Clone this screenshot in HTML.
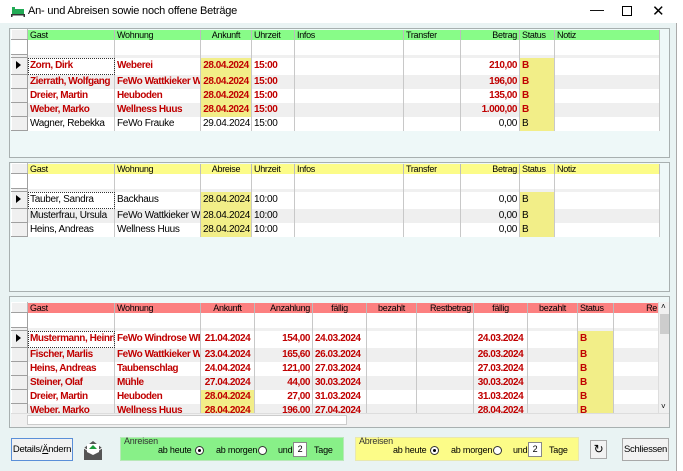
<!DOCTYPE html>
<html><head><meta charset="utf-8"><style>
*{box-sizing:border-box;margin:0;padding:0}
body{width:683px;height:471px;background:#fff;font-family:"Liberation Sans",sans-serif;font-size:10px;position:relative;overflow:hidden;color:#000}
.win{position:absolute;left:0;top:0;width:677px;height:471px;background:#e9f3f3;border-right:1px solid #aaa}
.tb{position:absolute;left:0;top:0;width:677px;height:23px;background:#fff;font-size:11px}
.panel{position:absolute;left:9px;width:661px;background:#eef8f8;border:1px solid #a8b0b0}
.grid{position:absolute;left:1px;top:0;width:648px;border-collapse:collapse;table-layout:fixed;letter-spacing:-0.3px}
.grid td{height:14px;padding:0 2px;white-space:nowrap;overflow:hidden;border-right:1px solid #c8c8c8;line-height:14px}
.grid tr.h td{height:10px;line-height:10px;font-size:9px;border-right:1px solid #bbb}
.grid tr.e td{height:15px;background:#fff}
.grid tr.s td{height:3px;background:#f0f0f0;line-height:3px}
.grid td.i{background:#f0f0f0;border:1px solid #a0a0a0;border-top-color:#fff;border-left-color:#fff;padding:0}
.r{text-align:right}.c{text-align:center}
.b td{color:#c00000;font-weight:bold;letter-spacing:-0.45px}
.y{background:#f2ee88!important}
.alt td{background:#efefef}
.w td{background:#fff}
.g td{background:#88fc88}
.yh td{background:#fcfc88}
.rh td{background:#fc8080}
.btn{position:absolute;border:1px solid #a8a8a8;background:#f2f2f2;font-size:9.5px;text-align:center;white-space:nowrap;letter-spacing:-0.3px}
.grp{position:absolute;height:23px;font-size:9px;letter-spacing:-0.2px}
.grp span{position:absolute;white-space:nowrap}
.rad{width:9px;height:9px;border:1px solid #333;border-radius:50%;background:#fff}
.rad.on::after{content:"";position:absolute;left:2px;top:2px;width:3px;height:3px;border-radius:50%;background:#000}
.tri{display:inline-block;width:0;height:0;border-left:5px solid #000;border-top:4px solid transparent;border-bottom:4px solid transparent;margin:3px 0 0 4px}
</style></head><body>
<div class="win">
<div class="tb">
<svg style="position:absolute;left:11px;top:6px" width="14" height="11"><rect x="1" y="3" width="12" height="5" fill="#2a5"/><rect x="1" y="1" width="3" height="3" fill="#2a5"/><rect x="0" y="8" width="14" height="1.5" fill="#333"/><rect x="0" y="8" width="1.5" height="3" fill="#333"/><rect x="12.5" y="8" width="1.5" height="3" fill="#333"/></svg>
<span style="position:absolute;left:28px;top:5px;letter-spacing:-0.2px">An- und Abreisen sowie noch offene Beträge</span>
<span style="position:absolute;left:590px;top:1px;font-size:14px">—</span>
<span style="position:absolute;left:622px;top:6px;width:10px;height:10px;border:1px solid #000"></span>
<span style="position:absolute;left:652px;top:2px;font-size:15px">✕</span>
</div>

<div class="panel" style="top:28px;height:130px">
<table class="grid">
<colgroup><col style="width:16px"><col style="width:87px"><col style="width:86px"><col style="width:51px"><col style="width:43px"><col style="width:109px"><col style="width:57px"><col style="width:59px"><col style="width:35px"><col style="width:105px"></colgroup>
<tr class="h g"><td class="i"></td><td>Gast</td><td>Wohnung</td><td class="c">Ankunft</td><td>Uhrzeit</td><td>Infos</td><td>Transfer</td><td class="r">Betrag</td><td>Status</td><td>Notiz</td></tr>
<tr class="e"><td class="i"></td><td></td><td></td><td></td><td></td><td></td><td></td><td></td><td></td><td></td></tr>
<tr class="s"><td class="i"></td><td></td><td></td><td></td><td></td><td></td><td></td><td></td><td></td><td></td></tr>
<tr class="b w"><td class="i"><span class="tri"></span></td><td style="outline:1px dotted #333;outline-offset:-1px">Zorn, Dirk</td><td>Weberei</td><td class="c y">28.04.2024</td><td>15:00</td><td></td><td></td><td class="r">210,00</td><td class="y">B</td><td></td></tr>
<tr class="b alt"><td class="i"></td><td>Zierrath, Wolfgang</td><td>FeWo Wattkieker W</td><td class="c y">28.04.2024</td><td>15:00</td><td></td><td></td><td class="r">196,00</td><td class="y">B</td><td></td></tr>
<tr class="b w"><td class="i"></td><td>Dreier, Martin</td><td>Heuboden</td><td class="c y">28.04.2024</td><td>15:00</td><td></td><td></td><td class="r">135,00</td><td class="y">B</td><td></td></tr>
<tr class="b alt"><td class="i"></td><td>Weber, Marko</td><td>Wellness Huus</td><td class="c y">28.04.2024</td><td>15:00</td><td></td><td></td><td class="r">1.000,00</td><td class="y">B</td><td></td></tr>
<tr class="w"><td class="i"></td><td>Wagner, Rebekka</td><td>FeWo Frauke</td><td class="c">29.04.2024</td><td>15:00</td><td></td><td></td><td class="r">0,00</td><td class="y">B</td><td></td></tr>
</table>
</div>

<div class="panel" style="top:162px;height:130px">
<table class="grid">
<colgroup><col style="width:16px"><col style="width:87px"><col style="width:86px"><col style="width:51px"><col style="width:43px"><col style="width:109px"><col style="width:57px"><col style="width:59px"><col style="width:35px"><col style="width:105px"></colgroup>
<tr class="h yh"><td class="i"></td><td>Gast</td><td>Wohnung</td><td class="c">Abreise</td><td>Uhrzeit</td><td>Infos</td><td>Transfer</td><td class="r">Betrag</td><td>Status</td><td>Notiz</td></tr>
<tr class="e"><td class="i"></td><td></td><td></td><td></td><td></td><td></td><td></td><td></td><td></td><td></td></tr>
<tr class="s"><td class="i"></td><td></td><td></td><td></td><td></td><td></td><td></td><td></td><td></td><td></td></tr>
<tr class="w"><td class="i"><span class="tri"></span></td><td style="outline:1px dotted #333;outline-offset:-1px">Tauber, Sandra</td><td>Backhaus</td><td class="c y">28.04.2024</td><td>10:00</td><td></td><td></td><td class="r">0,00</td><td class="y">B</td><td></td></tr>
<tr class="alt"><td class="i"></td><td>Musterfrau, Ursula</td><td>FeWo Wattkieker WHG</td><td class="c y">28.04.2024</td><td>10:00</td><td></td><td></td><td class="r">0,00</td><td class="y">B</td><td></td></tr>
<tr class="w"><td class="i"></td><td>Heins, Andreas</td><td>Wellness Huus</td><td class="c y">28.04.2024</td><td>10:00</td><td></td><td></td><td class="r">0,00</td><td class="y">B</td><td></td></tr>
</table>
</div>

<div class="panel" style="top:296px;height:132px;overflow:hidden">
<table class="grid" style="top:5px">
<colgroup><col style="width:16px"><col style="width:87px"><col style="width:86px"><col style="width:54px"><col style="width:58px"><col style="width:54px"><col style="width:50px"><col style="width:57px"><col style="width:54px"><col style="width:50px"><col style="width:36px"><col style="width:46px"></colgroup>
<tr class="h rh"><td class="i"></td><td>Gast</td><td>Wohnung</td><td class="c">Ankunft</td><td class="r">Anzahlung</td><td class="c">fällig</td><td class="c">bezahlt</td><td class="r">Restbetrag</td><td class="c">fällig</td><td class="c">bezahlt</td><td>Status</td><td class="r">Re</td></tr>
<tr class="e"><td class="i"></td><td></td><td></td><td></td><td></td><td></td><td></td><td></td><td></td><td></td><td></td><td></td></tr>
<tr class="s"><td class="i"></td><td></td><td></td><td></td><td></td><td></td><td></td><td></td><td></td><td></td><td></td><td></td></tr>
<tr class="b w"><td class="i"><span class="tri"></span></td><td style="outline:1px dotted #333;outline-offset:-1px">Mustermann, Heinrich</td><td>FeWo Windrose WHG</td><td class="c">21.04.2024</td><td class="r">154,00</td><td>24.03.2024</td><td></td><td></td><td class="c">24.03.2024</td><td></td><td class="y">B</td><td></td></tr>
<tr class="b alt"><td class="i"></td><td>Fischer, Marlis</td><td>FeWo Wattkieker W</td><td class="c">23.04.2024</td><td class="r">165,60</td><td>26.03.2024</td><td></td><td></td><td class="c">26.03.2024</td><td></td><td class="y">B</td><td></td></tr>
<tr class="b w"><td class="i"></td><td>Heins, Andreas</td><td>Taubenschlag</td><td class="c">24.04.2024</td><td class="r">121,00</td><td>27.03.2024</td><td></td><td></td><td class="c">27.03.2024</td><td></td><td class="y">B</td><td></td></tr>
<tr class="b alt"><td class="i"></td><td>Steiner, Olaf</td><td>Mühle</td><td class="c">27.04.2024</td><td class="r">44,00</td><td>30.03.2024</td><td></td><td></td><td class="c">30.03.2024</td><td></td><td class="y">B</td><td></td></tr>
<tr class="b w"><td class="i"></td><td>Dreier, Martin</td><td>Heuboden</td><td class="c y">28.04.2024</td><td class="r">27,00</td><td>31.03.2024</td><td></td><td></td><td class="c">31.03.2024</td><td></td><td class="y">B</td><td></td></tr>
<tr class="b alt"><td class="i"></td><td>Weber, Marko</td><td>Wellness Huus</td><td class="c y">28.04.2024</td><td class="r">196,00</td><td>27.04.2024</td><td></td><td></td><td class="c">28.04.2024</td><td></td><td class="y">B</td><td></td></tr>
<tr class="b w"><td class="i"></td><td>Zierrath, Wolfgang</td><td>FeWo Wattkieker W</td><td class="c y">28.04.2024</td><td class="r">29,20</td><td>21.03.2024</td><td></td><td></td><td class="c">21.03.2024</td><td></td><td class="y">B</td><td></td></tr>
</table>
<div style="position:absolute;z-index:2;left:648px;top:5px;width:12px;height:111px;background:#f0f0f0;border-left:1px solid #ddd">
<div style="position:absolute;left:1px;top:12px;width:10px;height:20px;background:#cdcdcd"></div>
<div style="position:absolute;left:2px;top:0;font-size:8px">˄</div><div style="position:absolute;left:2px;top:100px;font-size:8px">˅</div></div>
<div style="position:absolute;z-index:2;left:1px;top:116px;width:659px;height:14px;background:#f0f0f0;border-top:1px solid #ddd">
<div style="position:absolute;left:16px;top:1px;width:320px;height:10px;background:#fff;border:1px solid #ccc"></div></div>
</div>

<div class="btn" style="left:11px;top:438px;width:62px;height:23px;line-height:21px;border-color:#5a8fd8">Details/<u>Ä</u>ndern</div>
<svg style="position:absolute;left:83px;top:439px" width="20" height="22"><polygon points="10,2 19,9 19,21 1,21 1,9" fill="#555"/><polygon points="4,5 16,5 16,13 10,16 4,13" fill="#fff"/><polygon points="6,10 10,6 14,10" fill="#1a9a3a"/><polyline points="1,9 10,15 19,9" fill="none" stroke="#fff" stroke-width="1"/></svg>
<div class="grp" style="left:120px;top:437px;width:224px;background:#88f088;border:1px solid #b8e8b8;height:24px">
<span style="left:3px;top:-2px;color:#333">Anreisen</span>
<span style="left:37px;top:7px">ab heute</span><span class="rad on" style="left:74px;top:8px"></span>
<span style="left:95px;top:7px">ab morgen</span><span class="rad" style="left:137px;top:8px"></span>
<span style="left:157px;top:7px">und</span><span style="left:172px;top:4px;width:14px;height:15px;background:#fff;border:1px solid #888;text-align:center;line-height:13px">2</span><span style="left:193px;top:7px">Tage</span></div>
<div class="grp" style="left:355px;top:437px;width:224px;background:#fcfc88;border:1px solid #e8e8b0;height:24px">
<span style="left:3px;top:-2px;color:#333">Abreisen</span>
<span style="left:37px;top:7px">ab heute</span><span class="rad on" style="left:74px;top:8px"></span>
<span style="left:95px;top:7px">ab morgen</span><span class="rad" style="left:137px;top:8px"></span>
<span style="left:157px;top:7px">und</span><span style="left:172px;top:4px;width:14px;height:15px;background:#fff;border:1px solid #888;text-align:center;line-height:13px">2</span><span style="left:193px;top:7px">Tage</span></div>
<div class="btn" style="left:590px;top:440px;width:17px;height:19px;line-height:17px;font-size:12px">↻</div>
<div class="btn" style="left:622px;top:438px;width:47px;height:23px;line-height:21px">Schliessen</div>
</div>
</body></html>
